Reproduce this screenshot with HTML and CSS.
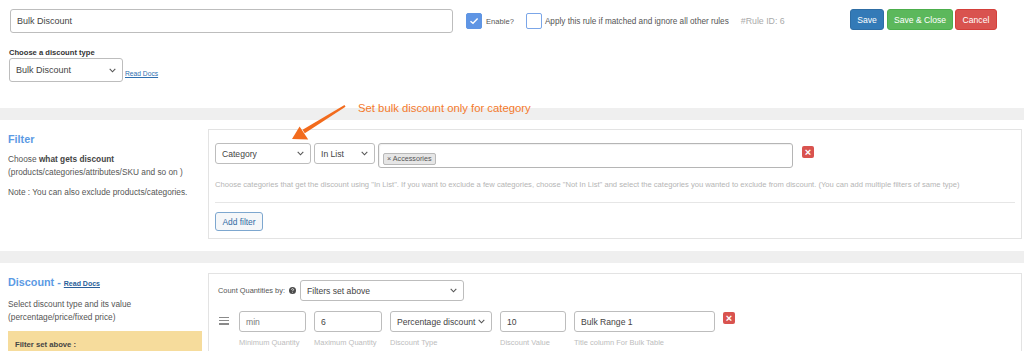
FILE: index.html
```html
<!DOCTYPE html>
<html lang="en">
<head>
<meta charset="utf-8">
<title>Bulk Discount rule</title>
<link rel="stylesheet" href="styles.css">
</head>
<body>
<div class="page">
  <header class="top">
    <div class="top-row">
      <div class="field title-field">Bulk Discount</div>
      <label class="check">
        <span class="box on"><svg width="10" height="8" viewBox="0 0 10 8"><path d="M1.5 4.2 L4 6.3 L8.6 1.6" fill="none" stroke="#fff" stroke-width="1.4"/></svg></span>
        <span>Enable?</span>
      </label>
      <label class="check apply">
        <span class="box"></span>
        <span>Apply this rule if matched and ignore all other rules</span>
      </label>
      <span class="rule-id">#Rule ID: 6</span>
      <div class="actions">
        <button class="btn btn-save">Save</button>
        <button class="btn btn-close">Save &amp; Close</button>
        <button class="btn btn-cancel">Cancel</button>
      </div>
    </div>
    <div class="type">
      <div class="type-label">Choose a discount type</div>
      <div class="type-row">
        <div class="field select type-select"><span>Bulk Discount</span><svg class="chev" width="7" height="5" viewBox="0 0 7 5"><path d="M0.7 0.9 L3.5 3.8 L6.3 0.9" fill="none" stroke="#555" stroke-width="1.1"/></svg></div>
        <a class="docs" href="#">Read Docs</a>
      </div>
    </div>
  </header>

  <div class="band"></div>

  <section class="block">
    <aside class="side">
      <h2 class="side-title">Filter</h2>
      <p class="side-text">Choose <b>what gets discount</b><br>(products/categories/attributes/SKU and so on )</p>
      <p class="side-text">Note : You can also exclude products/categories.</p>
    </aside>
    <div class="panel filter-panel">
      <div class="filter-row">
        <div class="field small select cat-select"><span>Category</span><svg class="chev" width="7" height="5" viewBox="0 0 7 5"><path d="M0.7 0.9 L3.5 3.8 L6.3 0.9" fill="none" stroke="#555" stroke-width="1.1"/></svg></div>
        <div class="field small select list-select"><span>In List</span><svg class="chev" width="7" height="5" viewBox="0 0 7 5"><path d="M0.7 0.9 L3.5 3.8 L6.3 0.9" fill="none" stroke="#555" stroke-width="1.1"/></svg></div>
        <div class="multi"><span class="tag">× Accessories</span></div>
        <span class="remove">×</span>
      </div>
      <p class="help">Choose categories that get the discount using "In List". If you want to exclude a few categories, choose "Not In List" and select the categories you wanted to exclude from discount. (You can add multiple filters of same type)</p>
      <hr class="divider">
      <button class="add-filter">Add filter</button>
    </div>
  </section>

  <div class="band"></div>

  <section class="block discount-block">
    <aside class="side">
      <h2 class="side-title">Discount - <a class="docs-bold" href="#">Read Docs</a></h2>
      <p class="side-text">Select discount type and its value<br>(percentage/price/fixed price)</p>
      <div class="note"><b>Filter set above :</b></div>
    </aside>
    <div class="panel discount-panel">
      <div class="count-row">
        <span class="count-label">Count Quantities by:</span>
        <svg class="help-icon" width="7" height="7" viewBox="0 0 7 7"><circle cx="3.5" cy="3.5" r="3.5" fill="#4a4a4a"/><path d="M2.4 2.6 C2.4 1.4 4.6 1.4 4.6 2.6 C4.6 3.3 3.5 3.3 3.5 4.2" fill="none" stroke="#fff" stroke-width="0.8"/><circle cx="3.5" cy="5.3" r="0.45" fill="#fff"/></svg>
        <div class="field small select count-select"><span>Filters set above</span><svg class="chev" width="7" height="5" viewBox="0 0 7 5"><path d="M0.7 0.9 L3.5 3.8 L6.3 0.9" fill="none" stroke="#555" stroke-width="1.1"/></svg></div>
      </div>
      <div class="range-row">
        <span class="handle"><i></i><i></i><i></i></span>
        <div class="cell w-min"><div class="field small muted">min</div><div class="cap">Minimum Quantity</div></div>
        <div class="cell w-max"><div class="field small">6</div><div class="cap">Maximum Quantity</div></div>
        <div class="cell w-type"><div class="field small select"><span>Percentage discount</span><svg class="chev" width="7" height="5" viewBox="0 0 7 5"><path d="M0.7 0.9 L3.5 3.8 L6.3 0.9" fill="none" stroke="#555" stroke-width="1.1"/></svg></div><div class="cap">Discount Type</div></div>
        <div class="cell w-val"><div class="field small">10</div><div class="cap">Discount Value</div></div>
        <div class="cell w-title"><div class="field small">Bulk Range 1</div><div class="cap">Title column For Bulk Table</div></div>
        <span class="remove">×</span>
      </div>
    </div>
  </section>

  <div class="annotation">Set bulk discount only for category</div>
  <svg class="arrow" width="66" height="46" viewBox="0 0 66 46">
    <polygon points="59.5,5 60.5,6.8 19.8,33.2 17.6,29.8" fill="#f26b1d"/>
    <polygon points="7,39 14.6,26.4 23.2,39.6" fill="#f26b1d"/>
  </svg>
</div>
</body>
</html>
```
FILE: styles.css
```css
* { box-sizing: border-box; margin: 0; padding: 0; }
html { overflow: hidden; }
body {
  font-family: "Liberation Sans", Arial, sans-serif;
  color: #444;
  background: #fff;
  width: 1024px;
}
.page { position: relative; }

/* ---------- top area ---------- */
.top { padding: 9px 27px 26px 10px; }
.top-row { display: flex; align-items: center; height: 24px; }
.field {
  height: 24px;
  border: 1px solid #bdbdbd;
  border-radius: 3px;
  display: flex;
  align-items: center;
  padding: 0 6px;
  font-size: 9px;
  color: #444;
  background: #fff;
  white-space: nowrap;
}
.field.small { height: 21px; font-size: 8.6px; }
.field.muted { color: #777; }
.select { justify-content: space-between; }
.chev { flex: none; }
.title-field { width: 443px; }

.check { display: flex; align-items: center; gap: 4px; font-size: 7.6px; color: #555; margin-left: 13px; }
.check.apply { gap: 3px; font-size: 8.2px; margin-left: 12px; }
.box {
  width: 16px; height: 16px;
  border: 1.5px solid #7ba6e8;
  border-radius: 2px;
  display: flex; align-items: center; justify-content: center;
  background: #fff;
  flex: none;
}
.box.on { background: #5f95e4; border-color: #5f95e4; }
.rule-id { margin-left: 12px; font-size: 8.8px; color: #aaa; }

.actions { margin-left: auto; align-self: flex-start; display: flex; gap: 2px; }
.btn {
  height: 21px;
  border: 1px solid;
  border-radius: 3px;
  color: #fff;
  font-family: inherit;
  font-size: 8.6px;
  padding: 0;
  text-align: center;
}
.btn-save { width: 34px; background: #337ab7; border-color: #2e6da4; }
.btn-close { width: 66px; background: #5cb85c; border-color: #4cae4c; margin-left: 1px; }
.btn-cancel { width: 42px; background: #d9534f; border-color: #d43f3a; }

.type { margin-top: 15px; margin-left: -1px; }
.type-label { font-size: 7.6px; font-weight: bold; line-height: 10px; color: #333; }
.type-row { display: flex; align-items: flex-end; gap: 2px; }
.type-select { width: 114px; }
.docs { font-size: 6.7px; color: #2f6fb0; text-decoration: underline; margin-bottom: 5px; }

/* ---------- section blocks ---------- */
.band { height: 12px; background: #efefef; }
.block { display: flex; align-items: flex-start; padding: 9px 2px 12px 8px; }
.side { width: 194px; margin-right: 6px; padding-top: 3px; flex: none; }
.side-title { font-size: 10.8px; line-height: 14px; font-weight: bold; color: #5b9ae4; }
.side-text { font-size: 8.3px; line-height: 13px; color: #555; margin-top: 7px; }
.side-text b { color: #444; }
.panel { flex: 1; border: 1px solid #e3e3e3; }

.filter-panel { padding: 13px 6px 7px 6px; }
.filter-row { display: flex; align-items: flex-start; }
.cat-select { width: 96px; }
.list-select { width: 61px; margin-left: 3px; }
.multi {
  width: 415px; height: 25px; margin-left: 3px;
  border: 1px solid #b5b5b5; border-radius: 3px;
  box-shadow: inset 1px 1px 1px rgba(0,0,0,0.06);
  padding: 3px 4px;
}
.tag {
  display: inline-block;
  height: 12px; line-height: 10px;
  padding: 0 3px;
  background: #e6e6e6; border: 1px solid #b9b9b9; border-radius: 2px;
  font-size: 7.2px; color: #555;
}
.remove {
  width: 12px; height: 12px; margin-left: 9px; margin-top: 3px;
  background: #d9534f; border-radius: 2px;
  color: #fff; font-size: 11px; font-weight: bold; line-height: 12px; text-align: center;
  flex: none;
}
.help { margin-top: 12px; font-size: 7.6px; line-height: 10px; color: #b5b5b5; white-space: nowrap; }
.divider { margin-top: 12px; border: 0; border-top: 1px solid #e6e6e6; }
.add-filter {
  margin-top: 9px;
  width: 48px; height: 19px;
  font-family: inherit; font-size: 8.4px; color: #2f6aa3;
  background: #f5f7f9; border: 1px solid #7da7cf; border-radius: 3px;
}

/* ---------- discount ---------- */
.discount-block { height: 160px; }
.docs-bold { font-size: 7px; color: #2a5f9a; text-decoration: underline; }
.note {
  margin-top: 7px;
  background: #f6dc9c;
  padding: 7px 7px 20px;
  font-size: 7.7px; line-height: 13px; color: #444;
}
.discount-panel { margin-top: 1px; padding: 6px 9px; min-height: 140px; }
.count-row { display: flex; align-items: center; }
.count-label { font-size: 7.4px; color: #555; }
.help-icon { margin-left: 4px; }
.count-select { width: 164px; margin-left: 4px; font-size: 9px; }
.range-row { display: flex; align-items: flex-start; margin-top: 10px; gap: 8px; }
.handle { width: 10px; margin-left: 1px; margin-right: 2px; margin-top: 6px; display: flex; flex-direction: column; gap: 2px; }
.handle i { display: block; height: 1.2px; background: #8a8a8a; }
.cell { display: flex; flex-direction: column; }
.w-min { width: 67px; }
.w-max { width: 68px; }
.w-type { width: 102px; }
.w-val { width: 66px; }
.w-title { width: 141px; }
.cap { margin-top: 6px; font-size: 7.5px; line-height: 10px; color: #bdbdbd; white-space: nowrap; }
.range-row .remove { margin: 1px 0 0; }

/* ---------- annotation overlay ---------- */
.annotation {
  position: absolute; left: 358px; top: 101px;
  font-size: 11.3px; line-height: 14px; color: #f47a2c;
  white-space: nowrap;
}
.arrow { position: absolute; left: 285px; top: 100px; }
```
